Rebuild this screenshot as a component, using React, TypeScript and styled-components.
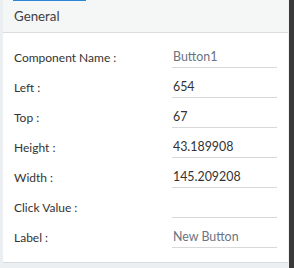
import styled, { createGlobalStyle } from "styled-components"

const GlobalStyle = createGlobalStyle`
  html, body {
    margin: 0;
    padding: 0;
    background: #eceff1;
    font-family: Lato, "Noto Sans", sans-serif;
  }
`

const Frame = styled.div`
  display: flex;
  width: 294px;
  height: 268px;
`

const Panel = styled.div`
  margin-left: 3px;
  width: 285px;
  height: 263px;
  background: #ffffff;
  border-bottom: 1px solid #d9dcde;
  box-sizing: border-box;
  display: flex;
  flex-direction: column;
`

const Gutter = styled.div`
  width: 1px;
  background: #f2f2f2;
`

const Scrollbar = styled.div`
  width: 5px;
  background: #3a3a3a;
`

const Header = styled.div`
  position: relative;
  height: 33px;
  background: #f5f6f6;
  border-bottom: 1px solid #dcdcdc;
  box-sizing: border-box;
  display: flex;
  align-items: center;
  padding-left: 11px;
  font-size: 13.3px;
  color: #3c4043;
`

const TabLine = styled.span`
  position: absolute;
  top: 0;
  left: 10px;
  width: 73px;
  height: 1px;
  background: #2a86d6;
`

const Fields = styled.div`
  display: flex;
  flex-direction: column;
  padding: 9px 11px 0 11px;
`

const Row = styled.div`
  display: grid;
  grid-template-columns: 158px 105px;
  height: 30px;
  align-items: center;
`

const Label = styled.span`
  font-size: 12px;
  color: #333;
`

const Value = styled.div<{ $muted?: boolean }>`
  height: 22px;
  box-sizing: border-box;
  border-bottom: 1px solid #d8d8d8;
  padding: 1px 0 0 1px;
  font-size: 12.4px;
  line-height: 20px;
  color: ${(p) => (p.$muted ? "#6b7280" : "#333")};
`

const fields: { label: string; value: string; muted?: boolean }[] = [
  { label: "Component Name :", value: "Button1", muted: true },
  { label: "Left :", value: "654" },
  { label: "Top :", value: "67" },
  { label: "Height :", value: "43.189908" },
  { label: "Width :", value: "145.209208" },
  { label: "Click Value :", value: "" },
  { label: "Label :", value: "New Button", muted: true },
]

export default function App() {
  return (
    <>
      <GlobalStyle />
      <Frame>
        <Panel>
          <Header>
            <TabLine />
            General
          </Header>
          <Fields>
            {fields.map((f) => (
              <Row key={f.label}>
                <Label>{f.label}</Label>
                <Value $muted={f.muted}>{f.value}</Value>
              </Row>
            ))}
          </Fields>
        </Panel>
        <Gutter />
        <Scrollbar />
      </Frame>
    </>
  )
}
